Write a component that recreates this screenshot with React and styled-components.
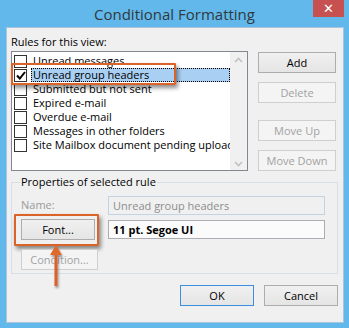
import React from 'react';
import styled, { createGlobalStyle } from "styled-components"

const Global = createGlobalStyle`
    * { box-sizing: border-box; }
    body {
        margin: 0;
        font-family: "Open Sans", "Noto Sans", sans-serif;
        font-size: 11px;
        color: #000;
    }
`

const Window = styled.div`
    width: 349px;
    height: 328px;
    background: #62b8ea;
    display: flex;
    flex-direction: column;
    overflow: hidden;
`

const TitleBar = styled.div`
    height: 27px;
    display: grid;
    grid-template-columns: 1fr auto 1fr;
    align-items: start;

    .title {
        grid-column: 2;
        font-size: 15px;
        line-height: 27px;
        color: #2f3a40;
        padding-top: 1px;
    }
`

const Close = styled.div`
    grid-column: 3;
    justify-self: end;
    margin-right: 5px;
    width: 31px;
    height: 17px;
    background: #c75050;
    color: #fff;
    font-family: "DejaVu Sans", sans-serif;
    font-weight: bold;
    font-size: 13px;
    line-height: 17px;
    text-align: center;
`

const Client = styled.div`
    margin: 0 5px 0 6px;
    height: 296px;
    background: #f0f0f0;
    border: 1px solid #a9c6da;
    display: flex;
    flex-direction: column;
`

const Top = styled.div`
    display: flex;
    padding: 6px 0 0 4px;
`

const LeftCol = styled.div`
    width: 237px;
    display: flex;
    flex-direction: column;
`

const Label = styled.div`
    line-height: 16px;
    height: 16px;
    margin-bottom: 1px;
    color: ${p => p.$disabled ? "#9a9a9a" : "#000"};
`

const ListWrap = styled.div`
    position: relative;
`

const List = styled.div`
    height: 120px;
    border: 1px solid #828790;
    background: #fff;
    display: flex;
    overflow: hidden;
`

const Rows = styled.div`
    flex: 1;
    padding-top: 2px;
    overflow: hidden;
`

const Row = styled.div`
    height: 14px;
    display: flex;
    align-items: center;
    padding-left: 2px;
    white-space: nowrap;
`

const Check = styled.span`
    width: 13px;
    height: 13px;
    flex: none;
    border: 1px solid #333;
    background: #fff;
    display: flex;
    align-items: center;
    justify-content: center;
    margin-right: 4px;
`

const ItemText = styled.span`
    flex: 1;
    height: 14px;
    line-height: 14px;
    padding-left: 2px;
    background: ${p => p.$selected ? "#a9cff3" : "transparent"};
    outline: ${p => p.$selected ? "1px dotted #000" : "none"};
    outline-offset: -1px;
    overflow: hidden;
`

const Scrollbar = styled.div`
    width: 17px;
    flex: none;
    background: #f0f0f0;
    display: flex;
    flex-direction: column;
    justify-content: space-between;
    align-items: center;
    padding: 5px 0 3px;
`

const Highlight = styled.div`
    position: absolute;
    left: ${p => p.$left}px;
    top: ${p => p.$top}px;
    width: ${p => p.$w}px;
    height: ${p => p.$h}px;
    border: 2px solid #db6328;
    border-radius: 1px;
    box-shadow: 2px 3px 4px rgba(0, 0, 0, 0.45);
    pointer-events: none;
`

const RightCol = styled.div`
    margin-left: 10px;
    padding-top: 18px;
    display: flex;
    flex-direction: column;
`

const Button = styled.div`
    width: ${p => p.$w || 78}px;
    height: 21px;
    margin-top: ${p => p.$mt || 0}px;
    border: 1px solid ${p => p.$focus ? "#3c8ee0" : p.$disabled ? "#cfcfcf" : "#adadad"};
    background: ${p => p.$disabled ? "#f4f4f4" : "linear-gradient(#f0f0f0, #e5e5e5)"};
    color: ${p => p.$disabled ? "#a2a2a2" : "#000"};
    display: flex;
    align-items: center;
    justify-content: center;
    line-height: 1;
`

const Group = styled.fieldset`
    margin: 3px 5px 0 4px;
    padding: 0 9px 8px 9px;
    border: 1px solid #d5dfe5;
    border-radius: 0;
    min-width: 0;

    legend {
        padding: 0 1px;
        margin-left: -1px;
        line-height: 16px;
    }
`

const Form = styled.div`
    display: grid;
    grid-template-columns: 87px 217px;
    grid-template-rows: 19px 21px 21px;
    row-gap: 4px;
    margin-top: 6px;
    align-items: center;

    .cond { margin-top: 9px; }
`

const Field = styled.div`
    height: 19px;
    border: 1px solid ${p => p.$disabled ? "#c3d3e3" : "#abadb3"};
    background: ${p => p.$disabled ? "#f0f0f0" : "#fbfbfb"};
    color: ${p => p.$disabled ? "#8d8d8d" : "#000"};
    font-weight: ${p => p.$bold ? 700 : 400};
    padding-left: 4px;
    line-height: 17px;
`

const Cell = styled.div`
    position: relative;
`

const Arrow = styled.svg`
    position: absolute;
    left: 28px;
    top: -4px;
    overflow: visible;
`

const Footer = styled.div`
    display: flex;
    justify-content: flex-end;
    gap: 10px;
    padding: 11px 5px 0 0;
`

const items = [
    "Unread messages",
    "Unread group headers",
    "Submitted but not sent",
    "Expired e-mail",
    "Overdue e-mail",
    "Messages in other folders",
    "Site Mailbox document pending upload",
]

const Chevron = ({ up }) => (
    <svg width="9" height="6" viewBox="0 0 9 6">
        <path d={up ? "M1 5 L4.5 1.5 L8 5" : "M1 1 L4.5 4.5 L8 1"} fill="none" stroke="#c2c2c2" strokeWidth="1.6" />
    </svg>
)

const App = () => {
    return (
        <Window>
            <Global />
            <TitleBar>
                <div className="title">Conditional Formatting</div>
                <Close>✕</Close>
            </TitleBar>
            <Client>
                <Top>
                    <LeftCol>
                        <Label>Rules for this view:</Label>
                        <ListWrap>
                            <List>
                                <Rows>
                                    {items.map((t, i) => (
                                        <Row key={t}>
                                            <Check>
                                                {i === 1 && (
                                                    <svg width="10" height="9" viewBox="0 0 10 9">
                                                        <path d="M1 4.5 L3.8 7.5 L9 1" fill="none" stroke="#000" strokeWidth="2" />
                                                    </svg>
                                                )}
                                            </Check>
                                            <ItemText $selected={i === 1}>{t}</ItemText>
                                        </Row>
                                    ))}
                                </Rows>
                                <Scrollbar>
                                    <Chevron up />
                                    <Chevron />
                                </Scrollbar>
                            </List>
                            <Highlight $left={0} $top={12} $w={165} $h={22} />
                        </ListWrap>
                    </LeftCol>
                    <RightCol>
                        <Button>Add</Button>
                        <Button $disabled $mt={9}>Delete</Button>
                        <Button $disabled $mt={17}>Move Up</Button>
                        <Button $disabled $mt={9}>Move Down</Button>
                    </RightCol>
                </Top>
                <Group>
                    <legend>Properties of selected rule</legend>
                    <Form>
                        <Label $disabled>Name:</Label>
                        <Field $disabled>Unread group headers</Field>
                        <Cell>
                            <Button $w={74}>Font...</Button>
                            <Highlight $left={-7} $top={-5} $w={85} $h={32} />
                        </Cell>
                        <Field $bold>11 pt. Segoe UI</Field>
                        <Cell className="cond">
                            <Button $w={77} $disabled>Condition...</Button>
                            <Arrow width="14" height="44" viewBox="0 0 14 44">
                                <defs>
                                    <filter id="sh" x="-50%" y="-20%" width="200%" height="150%">
                                        <feDropShadow dx="1" dy="2" stdDeviation="1.2" floodColor="#000" floodOpacity="0.4" />
                                    </filter>
                                </defs>
                                <g filter="url(#sh)">
                                    <rect x="5.5" y="8" width="3" height="33" fill="#d9602a" />
                                    <path d="M7 0 L13 10 L1 10 Z" fill="#e06a2c" />
                                </g>
                            </Arrow>
                        </Cell>
                    </Form>
                </Group>
                <Footer>
                    <Button $w={74} $focus>OK</Button>
                    <Button $w={74}>Cancel</Button>
                </Footer>
            </Client>
        </Window>
    )
}

export default App
